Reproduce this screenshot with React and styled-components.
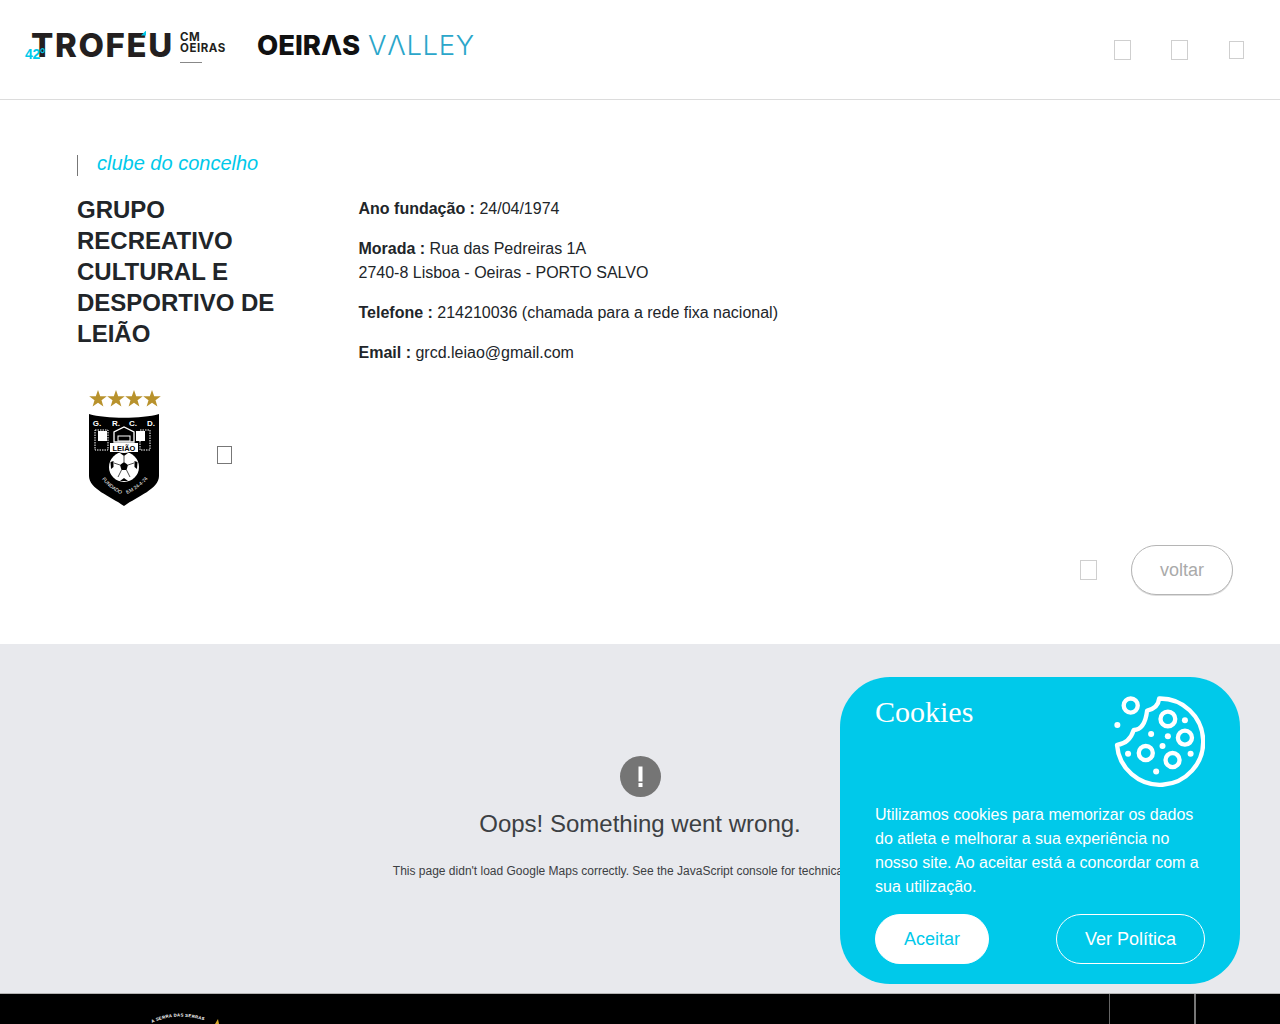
import React from "react";
import styled, { createGlobalStyle } from "styled-components";

const GlobalStyle = createGlobalStyle`
  html, body {
    margin: 0;
    height: 100%;
    overflow: hidden;
    background: #fff;
    color: #212529;
    font-family: "Liberation Sans", Arial, sans-serif;
    font-size: 16px;
    line-height: 24px;
  }
  * { box-sizing: border-box; }
`;

const CYAN = "#00c9ea";

function CrestLogo() {
  const star = (x) => (
    <polygon
      key={x}
      transform={`translate(${x} 9)`}
      points="0,-9 2.2,-2.8 8.8,-2.8 3.5,1.2 5.4,7.5 0,3.7 -5.4,7.5 -3.5,1.2 -8.8,-2.8 -2.2,-2.8"
      fill="#b8922c"
    />
  );
  return (
    <svg width="74" height="118" viewBox="0 0 74 118">
      {[10, 28, 46, 64].map(star)}
      <path d="M1 24 C18 29 54 29 71 24 V86 C71 99 50 106 36 116 C22 106 1 99 1 86 Z" fill="#000" />
      <g fontFamily="Liberation Sans" fontSize="8" fontWeight="700" fill="#fff" textAnchor="middle">
        <text x="9" y="36">G.</text>
        <text x="28" y="36">R.</text>
        <text x="45" y="36">C.</text>
        <text x="63" y="36">D.</text>
      </g>
      <g fill="none" stroke="#fff" strokeWidth="1">
        <rect x="7" y="40" width="13" height="20" strokeDasharray="1.5 1" />
        <rect x="52" y="40" width="10" height="20" strokeDasharray="1.5 1" />
        <path d="M26 52 V42 L36 37 L46 42 V52 Z" strokeWidth="1.3" />
        <rect x="30" y="46" width="12" height="5" />
      </g>
      <rect x="10" y="41" width="9" height="10" fill="#fff" />
      <rect x="48" y="41" width="9" height="10" fill="#fff" />
      <rect x="22" y="53" width="28" height="9" fill="#fff" />
      <text x="36" y="60.5" textAnchor="middle" fontFamily="Liberation Sans" fontSize="7.5" fontWeight="700" fill="#000">LEIÃO</text>
      <circle cx="36" cy="77" r="15" fill="#fff" />
      <g fill="#000">
        <polygon points="36,72 40,75 38.5,80 33.5,80 32,75" />
        <polygon points="32,63 40,63 36,66" />
        <polygon points="22.5,72 25.5,71 25.5,77 23,79" />
        <polygon points="49.5,72 46.5,71 46.5,77 49,79" />
        <polygon points="32,91 40,91 36,88" />
      </g>
      <g stroke="#000" strokeWidth="0.7">
        <path d="M36 72 V66 M40 75 L46 73 M32 75 L26 73 M38.5 80 L42 87 M33.5 80 L30 87" />
      </g>
      <path id="crestArcL" d="M14 89 Q21 99 35 105" fill="none" />
      <path id="crestArcR" d="M39 104 Q53 98 61 87" fill="none" />
      <g fontFamily="Liberation Sans" fontSize="5" fill="#fff">
        <text>
          <textPath href="#crestArcL">FUNDADO</textPath>
        </text>
        <text>
          <textPath href="#crestArcR">EM 24-4-74</textPath>
        </text>
      </g>
    </svg>
  );
}

function CookieIcon() {
  return (
    <CookieSvg viewBox="70 40 275 280" fill="none" stroke="#fff" strokeWidth="13">
      <path strokeLinejoin="round" d="M208 56 A129 129 0 1 1 82 195 Q120 190 132 150 Q165 150 172 92 Q205 85 208 56 Z" />
      <circle cx="123" cy="77" r="21" />
      <circle cx="234" cy="117" r="22" />
      <circle cx="285" cy="173" r="21" />
      <circle cx="168" cy="219" r="21" />
      <circle cx="248" cy="240" r="21" />
      <g fill="#fff" stroke="none">
        <circle cx="83" cy="135" r="9" />
        <circle cx="285" cy="121" r="9" />
        <circle cx="184" cy="162" r="9" />
        <circle cx="234" cy="169" r="9" />
        <circle cx="218" cy="198" r="9" />
        <circle cx="115" cy="221" r="9" />
        <circle cx="302" cy="221" r="9" />
        <circle cx="199" cy="274" r="9" />
      </g>
    </CookieSvg>
  );
}

export default function App() {
  return (
    <>
      <GlobalStyle />
      <Header>
        <Logos>
          <TrofeuLogo>
            TROFEU
            <Degree>42°</Degree>
            <Accent />
          </TrofeuLogo>
          <CmOeiras>
            CM
            <br />
            OEIRAS
            <CmLine />
          </CmOeiras>
          <ValleyLogo>
            OEIRΛS<ValleyThin>VΛLLEY</ValleyThin>
          </ValleyLogo>
        </Logos>
        <HeaderIcons>
          <Tofu $w={17} $h={20} />
          <Tofu $w={17} $h={20} />
          <LastIcon $w={15} $h={18} />
        </HeaderIcons>
      </Header>

      <Main>
        <Label>clube do concelho</Label>
        <Details>
          <ClubColumn>
            <ClubName>GRUPO RECREATIVO CULTURAL E DESPORTIVO DE LEIÃO</ClubName>
            <CrestRow>
              <CrestLogo />
              <CrestTofu $w={15} $h={18} $color="#777" />
            </CrestRow>
          </ClubColumn>
          <div>
            <Info>
              <b>Ano fundação :</b> 24/04/1974
            </Info>
            <Info>
              <b>Morada :</b> Rua das Pedreiras 1A
              <br />
              2740-8 Lisboa - Oeiras - PORTO SALVO
            </Info>
            <Info>
              <b>Telefone :</b> 214210036 (chamada para a rede fixa nacional)
            </Info>
            <Info>
              <b>Email :</b> grcd.leiao@gmail.com
            </Info>
          </div>
        </Details>
        <BackRow>
          <Tofu $w={17} $h={20} />
          <BackButton>voltar</BackButton>
        </BackRow>
      </Main>

      <MapArea>
        <svg width="41" height="41" viewBox="0 0 41 41">
          <circle cx="20.5" cy="20.5" r="20.5" fill="#757575" />
          <rect x="18.5" y="10.5" width="4" height="15" fill="#fff" />
          <rect x="18.5" y="27" width="4" height="4" fill="#fff" />
        </svg>
        <ErrorTitle>Oops! Something went wrong.</ErrorTitle>
        <ErrorText>
          This page didn't load Google Maps correctly. See the JavaScript console for technical details.
        </ErrorText>
      </MapArea>

      <Footer>
        <FooterBadge viewBox="0 0 80 30">
          <path id="badgeArc" d="M3 29 Q30 16 62 29" fill="none" />
          <text fontFamily="Liberation Sans" fontSize="4.3" fontWeight="700" fill="#fff" letterSpacing="0.3">
            <textPath href="#badgeArc">A SERRA DAS SERRAS</textPath>
          </text>
          <path d="M66 30 L69 25 L70 30 Z" fill="#d9a92a" />
        </FooterBadge>
        <FooterCell />
        <FooterCell $wide />
      </Footer>

      <CookiePanel>
        <CookieTop>
          <CookieTitle>Cookies</CookieTitle>
          <CookieIcon />
        </CookieTop>
        <CookieText>
          Utilizamos cookies para memorizar os dados do atleta e melhorar a sua experiência no nosso site. Ao
          aceitar está a concordar com a sua utilização.
        </CookieText>
        <CookieButtons>
          <CookieButton $filled>Aceitar</CookieButton>
          <CookieButton>Ver Política</CookieButton>
        </CookieButtons>
      </CookiePanel>
    </>
  );
}

const Tofu = styled.span`
  display: block;
  flex: none;
  width: ${(p) => p.$w}px;
  height: ${(p) => p.$h}px;
  border: 1px solid ${(p) => p.$color || "#cfcfcf"};
`;

const LastIcon = styled(Tofu)`
  margin-left: 1px;
`;

const Header = styled.header`
  height: 100px;
  border-bottom: 1px solid #dcdcdc;
  padding: 0 36px 0 25px;
  display: flex;
  align-items: center;
  justify-content: space-between;
`;

const Logos = styled.div`
  display: flex;
  align-items: flex-start;
  height: 100px;
  padding-top: 25px;
`;

const TrofeuLogo = styled.div`
  position: relative;
  width: 155px;
  padding-left: 6px;
  font-family: Inter, sans-serif;
  font-weight: 800;
  font-size: 33px;
  line-height: 40px;
  letter-spacing: 1.6px;
  color: #231f20;
`;

const Degree = styled.span`
  position: absolute;
  left: 0;
  top: 21px;
  font-family: "Liberation Sans", sans-serif;
  font-size: 14px;
  line-height: 16px;
  font-weight: 700;
  letter-spacing: -0.4px;
  color: ${CYAN};
`;

const Accent = styled.span`
  position: absolute;
  left: 116px;
  top: 6px;
  width: 5px;
  height: 5px;
  background: ${CYAN};
  clip-path: polygon(100% 0, 100% 100%, 0 100%);
`;

const CmOeiras = styled.div`
  position: relative;
  width: 78px;
  padding-top: 7px;
  font-family: Inter, sans-serif;
  font-weight: 700;
  font-size: 11.5px;
  line-height: 11px;
  letter-spacing: 0.55px;
  color: #231f20;
`;

const CmLine = styled.span`
  position: absolute;
  left: 0;
  top: 37px;
  width: 22px;
  height: 1px;
  background: #888;
`;

const ValleyLogo = styled.div`
  display: flex;
  gap: 8px;
  margin-left: -1px;
  font-family: Inter, sans-serif;
  font-weight: 800;
  font-size: 27.5px;
  line-height: 40px;
  letter-spacing: -0.05px;
  color: #111;
`;

const ValleyThin = styled.span`
  font-weight: 300;
  letter-spacing: 0.65px;
  color: #2ba6ca;
`;

const HeaderIcons = styled.div`
  display: flex;
  align-items: center;
  gap: 40px;
`;

const Main = styled.main`
  height: 544px;
  padding: 55px 47px 0 77px;
`;

const Label = styled.div`
  height: 21px;
  padding-left: 19px;
  border-left: 1px solid #777;
  font-size: 20px;
  font-style: italic;
  line-height: 17px;
  color: ${CYAN};
`;

const Details = styled.div`
  display: grid;
  grid-template-columns: 281.5px 1fr;
  margin-top: 18px;
`;

const ClubColumn = styled.div`
  display: flex;
  flex-direction: column;
`;

const ClubName = styled.h2`
  margin: 0;
  width: 210px;
  font-size: 24px;
  line-height: 31px;
  font-weight: 700;
  color: #212529;
`;

const CrestRow = styled.div`
  display: flex;
  align-items: flex-start;
  gap: 55px;
  margin-top: 41px;
  padding-left: 11px;
`;

const CrestTofu = styled(Tofu)`
  margin-top: 56px;
`;

const Info = styled.p`
  margin: 0 0 16px;
  &:first-child {
    margin-top: 3px;
  }
`;

const BackRow = styled.div`
  display: flex;
  align-items: center;
  justify-content: flex-end;
  gap: 34px;
  margin-top: 37px;
`;

const BackButton = styled.button`
  width: 102px;
  height: 50px;
  border: 1px solid #b5b5b5;
  border-radius: 25px;
  background: #fff;
  box-shadow: 0 1px 0 #ddd;
  color: #aaa;
  font-family: "Liberation Sans", sans-serif;
  font-size: 18px;
`;

const MapArea = styled.section`
  height: 349px;
  background: #e8e9ed;
  display: flex;
  flex-direction: column;
  align-items: center;
  padding-top: 112px;
`;

const ErrorTitle = styled.div`
  margin-top: 11px;
  font-size: 24px;
  line-height: 32px;
  color: #3c4043;
`;

const ErrorText = styled.div`
  margin-top: 23px;
  font-size: 12px;
  line-height: 16px;
  color: #3c4043;
  white-space: nowrap;
`;

const Footer = styled.footer`
  position: relative;
  height: 200px;
  border-top: 1px solid #b4b4b4;
  background: #000;
  display: flex;
  justify-content: flex-end;
  padding-right: 84px;
`;

const FooterBadge = styled.svg`
  position: absolute;
  left: 149px;
  top: 0;
  width: 80px;
  height: 30px;
`;

const FooterCell = styled.div`
  flex: none;
  width: ${(p) => (p.$wide ? "2px" : "85px")};
  border-left: ${(p) => (p.$wide ? "2px solid #777" : "1px solid #666")};
`;

const CookiePanel = styled.aside`
  position: fixed;
  left: 840px;
  top: 677px;
  width: 400px;
  height: 307px;
  padding: 18px 35px 20px;
  border-radius: 50px;
  background: ${CYAN};
  color: #fff;
`;

const CookieTop = styled.div`
  display: flex;
  justify-content: space-between;
  align-items: flex-start;
  height: 108px;
`;

const CookieTitle = styled.div`
  font-family: "Liberation Serif", serif;
  font-size: 30px;
  line-height: 34px;
`;

const CookieSvg = styled.svg`
  width: 92px;
  height: 94px;
  flex: none;
  margin-top: -2px;
`;

const CookieText = styled.p`
  margin: 0;
  font-size: 16px;
  line-height: 24px;
`;

const CookieButtons = styled.div`
  display: flex;
  justify-content: space-between;
  margin-top: 15px;
`;

const CookieButton = styled.button`
  height: 50px;
  padding: 0 28px;
  border: 1px solid #fff;
  border-radius: 25px;
  background: ${(p) => (p.$filled ? "#fff" : "transparent")};
  color: ${(p) => (p.$filled ? CYAN : "#fff")};
  font-family: "Liberation Sans", sans-serif;
  font-size: 18px;
`;
